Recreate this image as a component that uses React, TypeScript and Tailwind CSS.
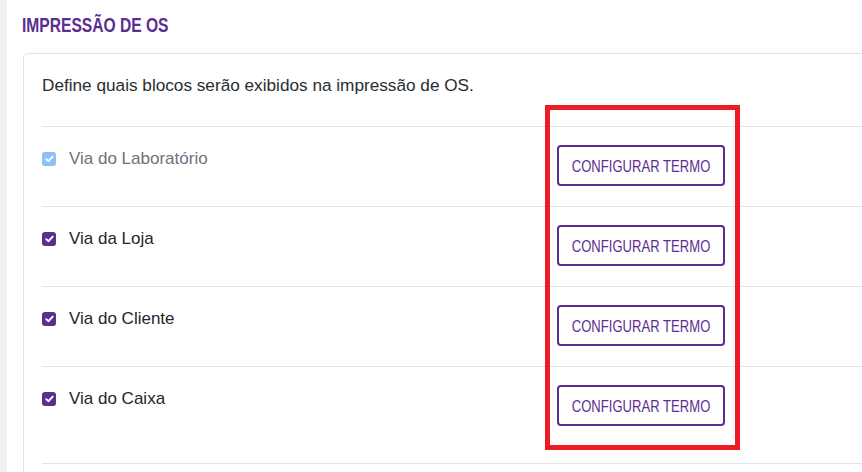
import React from 'react'

interface ViaRow {
  label: string
  disabled?: boolean
}

const rows: ViaRow[] = [
  { label: 'Via do Laboratório', disabled: true },
  { label: 'Via da Loja' },
  { label: 'Via do Cliente' },
  { label: 'Via do Caixa' },
]

function CheckBox({ disabled }: { disabled?: boolean }) {
  return (
    <span
      className={`w-[14px] h-[14px] shrink-0 rounded-[3px] flex items-center justify-center ${
        disabled ? 'bg-[#8bc0fb]' : 'bg-[#5c2d91]'
      }`}
    >
      <svg width="9" height="8" viewBox="0 0 9 8" fill="none">
        <path d="M1.3 4.2 L3.5 6.2 L7.7 1.6" stroke="white" strokeWidth="1.9" strokeLinecap="round" strokeLinejoin="round" />
      </svg>
    </span>
  )
}

function Row({ row, last }: { row: ViaRow; last: boolean }) {
  return (
    <div
      className={`flex items-start border-t border-[#e4e4e4] pt-[18px] ${
        last ? 'h-[98px] border-b' : 'h-[80px]'
      }`}
    >
      <label className="w-[515px] mt-[2px] h-[24px] flex items-center gap-[13px]">
        <CheckBox disabled={row.disabled} />
        <span className={`text-[17px] leading-[24px] ${row.disabled ? 'text-[#6c737a]' : 'text-[#23262b]'}`}>
          {row.label}
        </span>
      </label>
      <button className="w-[168px] h-[41px] border-2 border-[#5c2d91] rounded-[4px] bg-white text-[#5c2d91] flex items-center justify-center">
        <span className="inline-block whitespace-nowrap text-[17px] leading-[20px] scale-x-[0.77] translate-y-[1px]">
          CONFIGURAR TERMO
        </span>
      </button>
    </div>
  )
}

export default function App() {
  return (
    <div className="relative w-[862px] h-[472px] overflow-hidden bg-white flex font-['Liberation_Sans',Arial,sans-serif]">
      <div className="w-[7px] shrink-0 bg-[#f1f1f5]" />
      <div className="flex-1 min-w-0">
        <h2 className="pl-[15px] pt-[12px] h-[36px] leading-[24px] whitespace-nowrap">
          <span className="inline-block origin-left scale-x-[0.78] translate-y-[1px] text-[20px] font-bold text-[#5c2d91]">
            IMPRESSÃO DE OS
          </span>
        </h2>
        <div className="ml-[16px] mt-[17px] w-[900px] h-[520px] border border-[#e3e3e3] rounded-[4px] bg-white pl-[18px] pt-[19px]">
          <p className="text-[17.2px] leading-[24px] text-[#2a2d31] mb-[29px]">
            Define quais blocos serão exibidos na impressão de OS.
          </p>
          {rows.map((row, i) => (
            <Row key={row.label} row={row} last={i === rows.length - 1} />
          ))}
        </div>
      </div>

      {/* highlight annotation */}
      <div className="absolute left-[545px] top-[105px] w-[195px] h-[345px] border-[5px] border-[#ed1c24] pointer-events-none" />
    </div>
  )
}
